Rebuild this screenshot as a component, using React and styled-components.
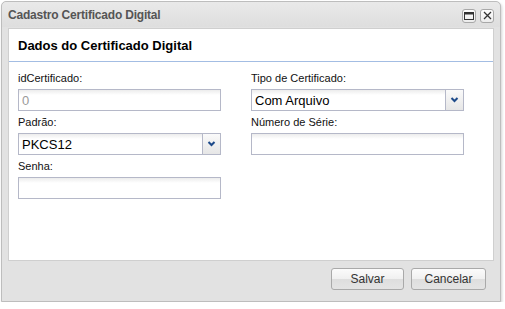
import React from 'react'
import styled, { createGlobalStyle } from 'styled-components'

const Global = createGlobalStyle`
  body {
    margin: 0;
    background: #fff;
    font-family: 'Liberation Sans', Arial, sans-serif;
  }
`

const Window = styled.div`
  margin: 1px 0 0 1px;
  width: 500px;
  height: 301px;
  box-sizing: border-box;
  border: 1px solid #bdbdbd;
  border-radius: 5px 5px 0 0;
  background: #e2e2e2;
  box-shadow: 1px 2px 3px rgba(0, 0, 0, 0.18);
  display: flex;
  flex-direction: column;
`

const TitleBar = styled.div`
  height: 25px;
  display: flex;
  align-items: center;
  justify-content: space-between;
  padding: 0 6px 0 6px;
  background: linear-gradient(#e9e9e9, #dedede);
  border-radius: 5px 5px 0 0;
`

const Title = styled.span`
  font-size: 12px;
  font-weight: bold;
  color: #555;
  letter-spacing: -0.2px;
`

const Tools = styled.div`
  display: flex;
  gap: 4px;
  padding-top: 2px;
`

const Tool = styled.div`
  width: 14px;
  height: 14px;
  box-sizing: border-box;
  border: 1px solid #a8a8a8;
  border-radius: 3px;
  background: linear-gradient(#fdfdfd, #ececec);
  display: flex;
  align-items: center;
  justify-content: center;
`

const Body = styled.div`
  padding: 1px 6px 0 6px;
`

const Panel = styled.div`
  height: 233px;
  box-sizing: border-box;
  border: 1px solid #cfcfcf;
  background: #fff;
`

const PanelHeader = styled.div`
  height: 32px;
  display: flex;
  align-items: center;
  padding-left: 9px;
  font-size: 13px;
  font-weight: bold;
  color: #000;
  border-bottom: 1px solid #a3bde3;
`

const Form = styled.div`
  display: grid;
  grid-template-columns: 203px 213px;
  column-gap: 30px;
  align-items: start;
  padding: 9px 0 0 9px;
`

const Column = styled.div`
  display: flex;
  flex-direction: column;
  gap: 4px;
`

const Field = styled.div`
  display: flex;
  flex-direction: column;
  gap: 4px;
`

const Label = styled.label`
  font-size: 11px;
  line-height: 14px;
  color: #111;
`

const Box = styled.div`
  height: 22px;
  box-sizing: border-box;
  border: 1px solid #b5b8c8;
  background: linear-gradient(#ececec 0, #fff 5px);
  display: flex;
  align-items: stretch;
`

const Value = styled.span`
  flex: 1;
  display: flex;
  align-items: center;
  padding: 0 3px;
  font-size: 13px;
  color: ${(p) => (p.$disabled ? '#9a9a9a' : '#000')};
`

const Trigger = styled.div`
  width: 17px;
  border-left: 1px solid #b5b8c8;
  background: linear-gradient(#fafafa, #e6e6e6);
  display: flex;
  align-items: center;
  justify-content: center;
`

const Footer = styled.div`
  display: flex;
  justify-content: flex-end;
  gap: 7px;
  padding: 7px 14px 0 0;
`

const Button = styled.button`
  width: ${(p) => p.$w}px;
  height: 22px;
  border: 1px solid #a9a9a9;
  border-radius: 3px;
  background: linear-gradient(#fbfbfb 0, #f0f0f0 50%, #dedede 51%, #e4e4e4 100%);
  font-family: 'Liberation Sans', Arial, sans-serif;
  font-size: 12px;
  color: #333;
  padding: 0;
`

const Arrow = () => (
  <svg width="9" height="6" viewBox="0 0 9 6">
    <path d="M1.5 1 L4.5 4 L7.5 1" fill="none" stroke="#1d4a8a" strokeWidth="2" />
  </svg>
)

const Input = ({ value, disabled }) => (
  <Box>
    <Value $disabled={disabled}>{value}</Value>
  </Box>
)

const Combo = ({ value }) => (
  <Box>
    <Value>{value}</Value>
    <Trigger>
      <Arrow />
    </Trigger>
  </Box>
)

export default function App() {
  return (
    <>
      <Global />
      <Window>
        <TitleBar>
          <Title>Cadastro Certificado Digital</Title>
          <Tools>
            <Tool>
              <svg width="10" height="8" viewBox="0 0 10 8">
                <rect x="0.5" y="0.5" width="9" height="7" fill="none" stroke="#333" />
                <rect x="0.5" y="0.5" width="9" height="2" fill="#333" />
              </svg>
            </Tool>
            <Tool>
              <svg width="9" height="9" viewBox="0 0 9 9">
                <path d="M1 1 L8 8 M8 1 L1 8" stroke="#333" strokeWidth="1.3" />
              </svg>
            </Tool>
          </Tools>
        </TitleBar>
        <Body>
          <Panel>
            <PanelHeader>Dados do Certificado Digital</PanelHeader>
            <Form>
              <Column>
                <Field>
                  <Label>idCertificado:</Label>
                  <Input value="0" disabled />
                </Field>
                <Field>
                  <Label>Padrão:</Label>
                  <Combo value="PKCS12" />
                </Field>
                <Field>
                  <Label>Senha:</Label>
                  <Input value="" />
                </Field>
              </Column>
              <Column>
                <Field>
                  <Label>Tipo de Certificado:</Label>
                  <Combo value="Com Arquivo" />
                </Field>
                <Field>
                  <Label>Número de Série:</Label>
                  <Input value="" />
                </Field>
              </Column>
            </Form>
          </Panel>
        </Body>
        <Footer>
          <Button $w={73}>Salvar</Button>
          <Button $w={75}>Cancelar</Button>
        </Footer>
      </Window>
    </>
  )
}
